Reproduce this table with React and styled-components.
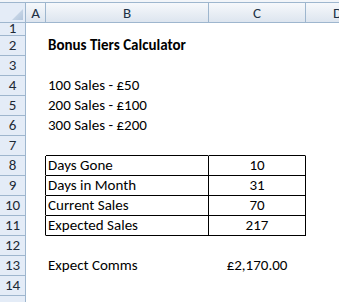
import React from "react";
import styled, { createGlobalStyle } from "styled-components";

const Global = createGlobalStyle`
  html, body { margin: 0; padding: 0; background: #fff; }
  body { font-family: Carlito, Lato, "Liberation Sans", sans-serif; }
`;

const COLS = "26px 20px 163px 97px 64px";
const LINE = "#9eb6ce";

const Sheet = styled.div`
  width: 339px;
  height: 302px;
  overflow: hidden;
  background: #fff;
  display: flex;
  flex-direction: column;
`;

const TopStrip = styled.div`
  height: 2px;
  flex: none;
  background: #f2f5f9;
  border-bottom: 1px solid ${LINE};
`;

const HeaderRow = styled.div`
  display: grid;
  grid-template-columns: ${COLS};
  height: 20px;
  flex: none;
`;

const ColHead = styled.div`
  box-sizing: border-box;
  border-right: 1px solid ${LINE};
  border-bottom: 1px solid ${LINE};
  background: linear-gradient(#f6f8fb, #dde5ef);
  display: flex;
  align-items: center;
  justify-content: center;
  font-size: 15px;
  color: #1e3146;
  padding-top: 1px;
  overflow: hidden;
  white-space: nowrap;
`;

const Corner = styled.div`
  box-sizing: border-box;
  border-right: 1px solid ${LINE};
  border-bottom: 1px solid ${LINE};
  background: #e4ecf7;
  position: relative;
`;

const CornerTri = styled.svg`
  position: absolute;
  right: 2px;
  bottom: 2px;
`;

const Row = styled.div`
  display: grid;
  grid-template-columns: ${COLS};
  height: ${(p) => p.$h}px;
  flex: none;
`;

const RowHead = styled.div`
  box-sizing: border-box;
  border-right: 1px solid ${LINE};
  border-bottom: 1px solid ${LINE};
  background: #e4ecf7;
  display: flex;
  align-items: ${(p) => (p.$short ? "center" : "flex-end")};
  justify-content: center;
  font-size: 15px;
  line-height: ${(p) => (p.$short ? "11px" : "15px")};
  color: #1e2a36;
  padding-bottom: ${(p) => (p.$short ? "1px" : "2px")};
  overflow: hidden;
`;

const Cell = styled.div`
  box-sizing: border-box;
  border-right: 1px solid ${(p) => (p.$r ? "#000" : "transparent")};
  border-bottom: 1px solid ${(p) => (p.$b ? "#000" : "transparent")};
  display: flex;
  align-items: flex-end;
  justify-content: ${(p) => (p.$center ? "center" : "flex-start")};
  padding: 0 2px 2px;
  font-size: 15px;
  line-height: 15px;
  font-weight: ${(p) => (p.$bold ? 700 : 400)};
  color: #000;
  white-space: nowrap;
  overflow: visible;
`;

const rows = [
  { n: 1, h: 13 },
  { n: 2, b: "Bonus Tiers Calculator", bold: true },
  { n: 3 },
  { n: 4, b: "100 Sales - £50" },
  { n: 5, b: "200 Sales - £100" },
  { n: 6, b: "300 Sales - £200" },
  { n: 7, tableTop: true },
  { n: 8, b: "Days Gone", c: "10", table: true },
  { n: 9, b: "Days in Month", c: "31", table: true },
  { n: 10, b: "Current Sales", c: "70", table: true },
  { n: 11, b: "Expected Sales", c: "217", table: true },
  { n: 12 },
  { n: 13, b: "Expect Comms", c: "£2,170.00" },
  { n: 14 },
  { n: 15, hidden: true },
];

export default function App() {
  return (
    <>
      <Global />
      <Sheet>
        <TopStrip />
        <HeaderRow>
          <Corner>
            <CornerTri width="11" height="11" viewBox="0 0 11 11">
              <defs>
                <linearGradient id="tri" x1="0" y1="0" x2="1" y2="1">
                  <stop offset="0" stopColor="#d6e1ee" />
                  <stop offset="1" stopColor="#b3c6dc" />
                </linearGradient>
              </defs>
              <polygon points="11,0 11,11 0,11" fill="url(#tri)" />
            </CornerTri>
          </Corner>
          <ColHead>A</ColHead>
          <ColHead>B</ColHead>
          <ColHead>C</ColHead>
          <ColHead>D</ColHead>
        </HeaderRow>
        {rows.map((r) => (
          <Row key={r.n} $h={r.h || 20}>
            <RowHead $short={!!r.h}>{r.hidden ? "" : r.n}</RowHead>
            <Cell $r={r.table} />
            <Cell $r={r.table} $b={r.table || r.tableTop} $bold={r.bold}>
              {r.b}
            </Cell>
            <Cell $r={r.table} $b={r.table || r.tableTop} $center>
              {r.c}
            </Cell>
            <Cell />
          </Row>
        ))}
      </Sheet>
    </>
  );
}
